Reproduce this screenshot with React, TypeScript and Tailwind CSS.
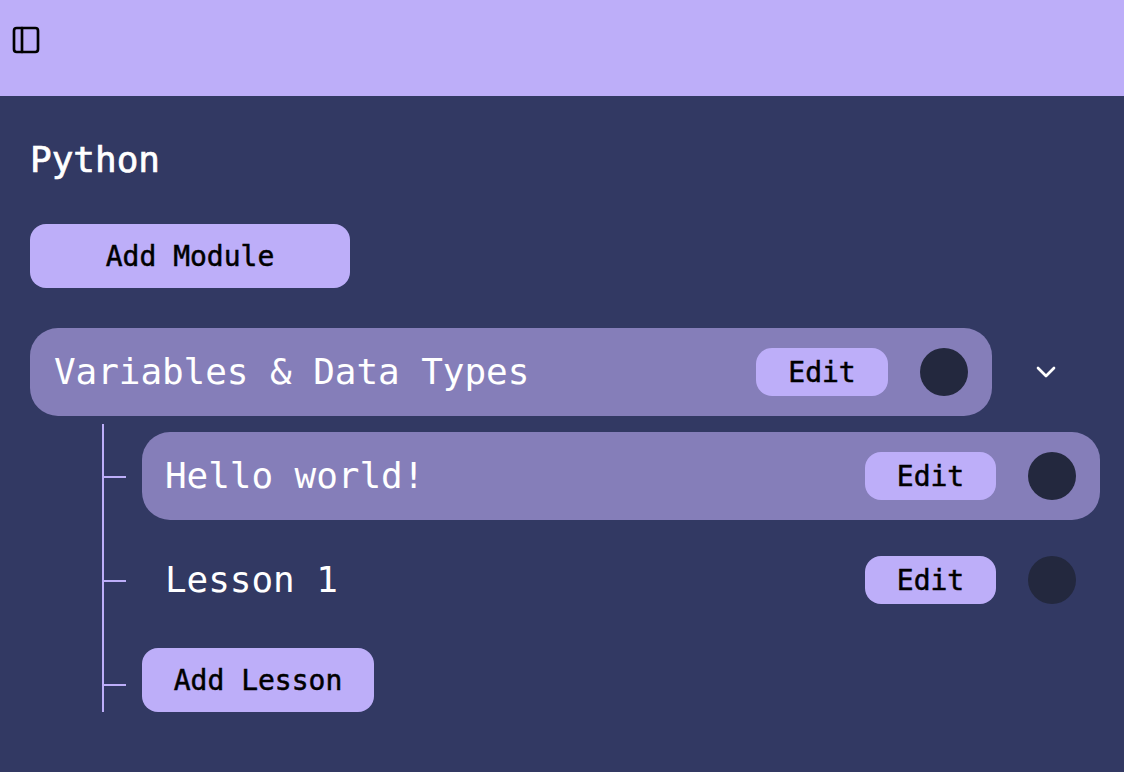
import { ChevronDown, PanelLeft } from 'lucide-react';

const font = "font-['DejaVu_Sans_Mono',monospace]";

function EditButton({ narrow }: { narrow?: boolean }) {
  return (
    <button className={`${narrow ? 'w-[131px]' : 'w-[132px]'} h-12 pt-0.5 rounded-2xl bg-[#bdaef9] text-black text-[28px] leading-none [-webkit-text-stroke:0.5px] flex items-center justify-center`}>
      Edit
    </button>
  );
}

function Row({ label, active, wide }: { label: string; active?: boolean; wide?: boolean }) {
  return (
    <div className={`h-[88px] flex items-center justify-between pr-6 rounded-[28px] ${wide ? 'w-[962px] pl-6' : 'w-[958px] pl-[23px]'} ${active ? 'bg-[#857eb9]' : ''}`}>
      <span className="text-white text-[36px] leading-none tracking-[-0.07px]">{label}</span>
      <div className="flex items-center gap-8">
        <EditButton narrow={!wide} />
        <div className="w-12 h-12 rounded-full bg-[#23283e]" />
      </div>
    </div>
  );
}

function Tick() {
  return <div className="w-[22px] h-0.5 mt-0.5 bg-[#bdaef9] mr-4 shrink-0" />;
}

export default function App() {
  return (
    <div className={`${font} min-h-screen bg-[#323963] overflow-hidden`}>
      <header className="h-24 bg-[#bdaef9] pl-2.5 pt-6">
        <PanelLeft size={32} color="black" />
      </header>

      <main className="pl-[30px]">
        <h1 className="mt-[44px] h-10 text-white text-[36px] leading-10 [-webkit-text-stroke:0.7px]">Python</h1>

        <button className="mt-11 w-80 h-16 pt-0.5 rounded-2xl bg-[#bdaef9] text-black text-[28px] leading-none [-webkit-text-stroke:0.5px] flex items-center justify-center">
          Add Module
        </button>

        <div className="mt-10 flex items-center">
          <Row label="Variables & Data Types" active wide />
          <ChevronDown size={32} color="white" className="ml-[38px]" />
        </div>

        <div className="ml-[72px] mt-2 w-fit border-l-2 border-[#bdaef9] pt-2">
          <div className="flex items-center">
            <Tick />
            <Row label="Hello world!" active />
          </div>
          <div className="mt-4 flex items-center">
            <Tick />
            <Row label="Lesson 1" />
          </div>
          <div className="mt-6 flex items-start">
            <div className="w-[22px] h-0.5 bg-[#bdaef9] mr-4 mt-9" />
            <button className="w-[232px] h-16 pt-0.5 rounded-2xl bg-[#bdaef9] text-black text-[28px] leading-none [-webkit-text-stroke:0.5px] flex items-center justify-center">
              Add Lesson
            </button>
          </div>
        </div>
      </main>
    </div>
  );
}
